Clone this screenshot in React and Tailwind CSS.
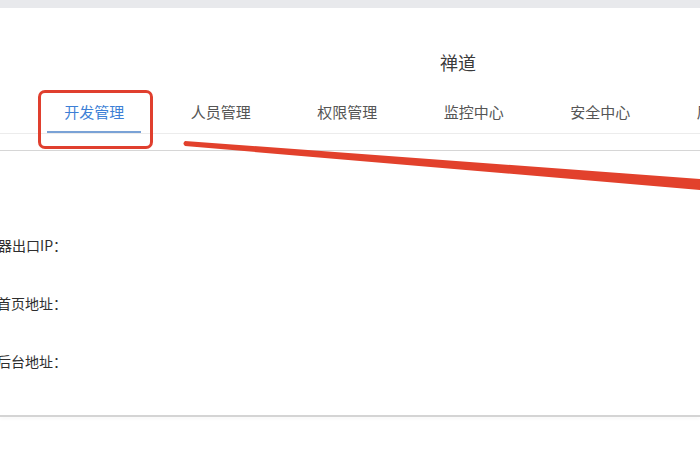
const tabs = ["开发管理", "人员管理", "权限管理", "监控中心", "安全中心", "届时设置"];

const fields = ["服务器出口IP：", "网站首页地址：", "网站后台地址："];

export default function App() {
  return (
    <div
      className="relative w-[700px] h-[470px] overflow-hidden bg-white text-[#333]"
      style={{ fontFamily: '"Noto Sans CJK SC", "Noto Sans", sans-serif' }}
    >
      {/* top strip */}
      <div className="h-[8px] bg-[#e8e9ec]" />

      {/* header */}
      <div className="pt-[41px] pl-[440px] text-[18px] leading-[26px] text-[#3a3a3a] whitespace-nowrap">
        禅道
      </div>

      {/* tabs */}
      <div className="mt-[17px] flex h-[42px] border-b border-[#ececec] pl-[31px] whitespace-nowrap">
        {tabs.map((t, i) => (
          <div key={t} className="relative w-[126.5px] shrink-0 flex justify-center pt-[10px]">
            <span
              className={
                i === 0
                  ? "text-[15px] leading-5 text-[#3d7fd6]"
                  : "text-[15px] leading-5 text-[#555]"
              }
            >
              {t}
            </span>
            {i === 0 && (
              <div className="absolute bottom-0 left-[16px] right-[17px] h-[2px] bg-[#7aa2d6]" />
            )}
          </div>
        ))}
      </div>

      {/* panel */}
      <div className="mt-[16px] border-t border-[#d6d6d6]">
        <div className="flex flex-col pt-[84px] gap-[38px]">
          {fields.map((f) => (
            <div key={f} className="flex justify-end w-[67px] h-[20px] text-[14px] leading-5 text-[#2e2e2e] whitespace-nowrap">
              {f}
            </div>
          ))}
        </div>
        <div className="mt-[44px] h-[2px] bg-[#d4d4d4] shadow-[0_2px_3px_rgba(0,0,0,0.04)]" />
      </div>

      {/* annotation: highlight box */}
      <div className="absolute left-[38px] top-[90px] w-[115px] h-[59px] rounded-[7px] border-[3px] border-[#e03f2e]" />

      {/* annotation: arrow stroke */}
      <svg className="absolute left-0 top-0 pointer-events-none" width="700" height="470">
        <path
          d="M185 141 L700 179 L700 190 L185 146 Q182 143.5 185 141 Z"
          fill="#e2412c"
        />
      </svg>
    </div>
  );
}
